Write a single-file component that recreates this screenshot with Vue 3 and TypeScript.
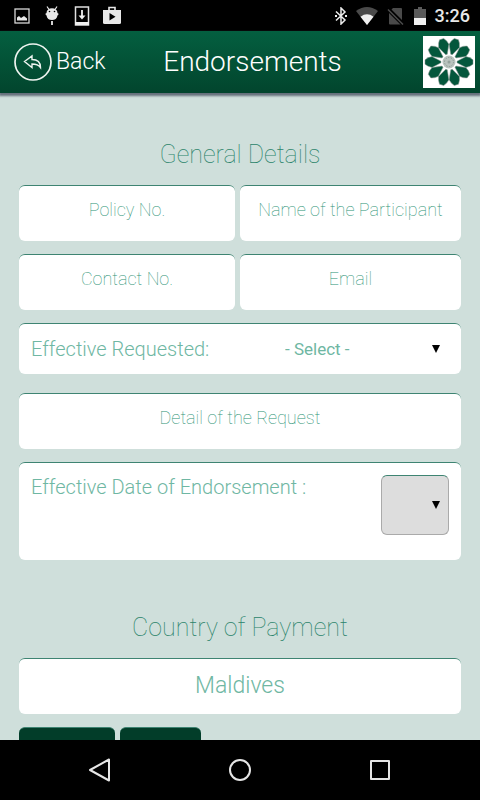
<script setup lang="ts">
import { ref } from 'vue'

const policyNo = ref('')
const participant = ref('')
const contactNo = ref('')
const email = ref('')
const requested = ref('')
const detail = ref('')
const effectiveDate = ref('')
const country = ref('Maldives')

const petals: number[] = Array.from({ length: 10 }, (_, i) => 18 + i * 36)
</script>

<template>
  <div class="screen">
    <div class="status">
      <div class="status-group left">
        <svg width="16" height="16" viewBox="0 0 16 16">
          <rect x="1" y="1" width="14" height="14" fill="none" stroke="#d8d8d8" stroke-width="1.3" />
          <path d="M3 12.500V9.500l2-1.500 2 2 3-2 3 2.500v2z" fill="#e8e8e8" />
        </svg>
        <svg width="16" height="20" viewBox="0 0 16 20">
          <path d="M3 0.500l2 3M13 0.500l-2 3" stroke="#e8e8e8" stroke-width="1.200" />
          <path d="M2.500 7a5.500 4.800 0 0 1 11 0l1.300 1-1.300 1.500c-.5 3-2.500 4.500-5.500 4.500s-5-1.500-5.500-4.500L1.200 8z" fill="#e8e8e8" />
          <circle cx="5.500" cy="5.500" r=".8" /><circle cx="10.500" cy="5.500" r=".8" />
          <path d="M8 15v4" stroke="#e8e8e8" stroke-width="1.800" />
        </svg>
        <svg width="16" height="20" viewBox="0 0 16 20">
          <rect x="1.500" y="1" width="13" height="18" fill="none" stroke="#e0e0e0" stroke-width="1.500" />
          <path d="M1 16h14v3H1z" fill="#f0f0f0" />
          <path d="M8 4v7" stroke="#f0f0f0" stroke-width="1.800" />
          <path d="M4.500 9.500h7L8 13.500z" fill="#f0f0f0" />
        </svg>
        <svg width="20" height="20" viewBox="0 0 20 20">
          <path d="M7 4V1.500h6V4" fill="none" stroke="#e8e8e8" stroke-width="1.600" />
          <path d="M1 4h18v12.500q0 1.500-1.500 1.500h-15Q1 18 1 16.500z" fill="#e8e8e8" />
          <path d="M7.500 7v7.500l6-3.700z" fill="#000" />
        </svg>
      </div>
      <div class="status-group right">
        <svg width="12" height="18" viewBox="0 0 12 18">
          <path d="M1 4.500l9 8.500-4 4V1l4 4-9 8.500" fill="none" stroke="#ececec" stroke-width="1.500" />
          <path d="M0 8h2v2H0zM10 8h2v2h-2z" fill="#ececec" />
        </svg>
        <svg width="22" height="18" viewBox="0 0 22 18">
          <path d="M0 4Q11-4 22 4L11 18z" fill="#4a4a4a" />
          <path d="M4.500 9.700Q11 5 17.500 9.700L11 18z" fill="#f0f0f0" />
        </svg>
        <svg width="18" height="18" viewBox="0 0 18 18">
          <path d="M6 1h8q1 0 1 1v11L4.500 2.500zM2 6l11.500 11.500H3q-1 0-1-1z" fill="#4a4a4a" />
          <path d="M1 2.500l15 15" stroke="#4a4a4a" stroke-width="1.500" />
        </svg>
        <svg width="12" height="18" viewBox="0 0 12 18">
          <path d="M0 2h4V0h4v2h4v9H0z" fill="#5a5a5a" />
          <path d="M0 11h12v7H0z" fill="#f0f0f0" />
        </svg>
        <span class="time">3:26</span>
      </div>
    </div>

    <header class="header">
      <button type="button" class="back">
        <svg width="38" height="38" viewBox="0 0 38 38" fill="none" stroke="#eef4f0">
          <circle cx="19" cy="19" r="18" stroke-width="1.700" />
          <path d="M10.500 18.500L18 13v3.500c5.500 0 8.500 2.500 8.500 8-2-3-4.500-3.500-8.500-3.500v3.500z" stroke-width="1.400" />
        </svg>
        <span>Back</span>
      </button>
      <h1>Endorsements</h1>
      <svg class="logo" width="52" height="52" viewBox="0 0 52 52">
        <rect width="52" height="52" fill="#fff" />
        <g transform="translate(26 26)">
          <path
            v-for="a in petals"
            :key="a"
            d="M-.8-8L-5.400-17Q-4.800-21-2.200-24h4.400Q4.800-21 5.400-17L.8-8z"
            :transform="`rotate(${a})`"
            fill="#04573c"
            stroke="#8f9a95"
            stroke-width=".5"
          />
          <circle r="6.500" fill="#b9c3be" />
          <circle r="4.500" fill="none" stroke="#8b9a93" stroke-dasharray="1.400 1.400" />
          <circle r="1.500" fill="#94a19b" />
        </g>
      </svg>
    </header>

    <main class="content">
      <form @submit.prevent>
        <h2>General Details</h2>
        <div class="rows">
          <div class="pair">
            <input v-model="policyNo" class="field" type="text" placeholder="Policy No." aria-label="Policy No." />
            <input v-model="participant" class="field" type="text" placeholder="Name of the Participant" aria-label="Name of the Participant" />
          </div>
          <div class="pair">
            <input v-model="contactNo" class="field" type="tel" placeholder="Contact No." aria-label="Contact No." />
            <input v-model="email" class="field" type="email" placeholder="Email" aria-label="Email" />
          </div>
          <div class="panel request">
            <label for="requested">Effective Requested:</label>
            <div class="picker">
              <select id="requested" v-model="requested">
                <option value="">- Select -</option>
              </select>
              <svg class="arrow" width="8" height="8" viewBox="0 0 8 8"><path d="M0 0h8L4 8z" /></svg>
            </div>
          </div>
          <input v-model="detail" class="field" type="text" placeholder="Detail of the Request" aria-label="Detail of the Request" />
          <div class="panel date">
            <label for="date">Effective Date of Endorsement :</label>
            <div class="picker boxed">
              <select id="date" v-model="effectiveDate">
                <option value=""></option>
              </select>
              <svg class="arrow" width="8" height="8" viewBox="0 0 8 8"><path d="M0 0h8L4 8z" /></svg>
            </div>
          </div>
        </div>
        <h2 class="second">Country of Payment</h2>
        <div class="rows">
          <input v-model="country" class="field country" type="text" aria-label="Country of Payment" />
          <div class="actions">
            <button type="submit" class="submit" aria-label="Submit"></button>
            <button type="reset" class="reset" aria-label="Reset"></button>
          </div>
        </div>
      </form>
    </main>

    <nav class="nav">
      <button type="button" aria-label="Back">
        <svg width="24" height="24" viewBox="0 0 24 24"><path d="M21 1.500v21L2 12z" /></svg>
      </button>
      <button type="button" aria-label="Home">
        <svg width="24" height="24" viewBox="0 0 24 24"><circle cx="12" cy="12" r="10" /></svg>
      </button>
      <button type="button" aria-label="Recent apps">
        <svg width="24" height="24" viewBox="0 0 24 24"><rect x="3" y="3" width="18" height="18" /></svg>
      </button>
    </nav>
  </div>
</template>

<style>
body {
  margin: 0;
  background: #000;
}
</style>

<style scoped>
.screen {
  display: flex;
  flex-direction: column;
  height: 100vh;
  background: #cfdfdb;
  font-family: Roboto, sans-serif;
  font-weight: 300;
}
.screen * {
  box-sizing: border-box;
}
svg {
  display: block;
  flex: none;
}
button,
input,
select {
  margin: 0;
  border: 0;
  font: inherit;
}
.status {
  flex: none;
  display: flex;
  align-items: center;
  justify-content: space-between;
  height: 31px;
  padding: 0 10px 0 14px;
  background: #000;
}
.status-group {
  display: flex;
  align-items: center;
}
.left {
  gap: 14px;
}
.left svg:last-child {
  margin-left: -2px;
}
.right {
  gap: 9px;
}
.time {
  color: #e8e8e8;
  font-size: 18px;
  font-weight: 500;
  line-height: 30px;
}
.header {
  position: relative;
  z-index: 1;
  flex: none;
  display: grid;
  grid-template-columns: 1fr auto 1fr;
  align-items: center;
  height: 62px;
  padding: 0 5px 0 14px;
  background: linear-gradient(#045f40, #02452d);
  box-shadow: 0 2px 2px 1px #66717c;
  color: #fff;
}
.back {
  justify-self: start;
  display: flex;
  align-items: center;
  gap: 4px;
  padding: 0;
  background: none;
  color: #fff;
  font-size: 23px;
  line-height: 32px;
}
h1 {
  margin: 0;
  padding-left: 16px;
  font-size: 28px;
  font-weight: 300;
  line-height: 32px;
}
.logo {
  justify-self: end;
}
.content {
  flex: 1;
  min-height: 0;
  overflow: hidden;
  padding: 46px 19px 0;
}
h2 {
  margin: 0 0 14px;
  color: #2a836a;
  font-size: 25px;
  font-weight: 100;
  line-height: 32px;
  text-align: center;
}
.second {
  margin-top: 52px;
}
.rows {
  display: flex;
  flex-direction: column;
  gap: 13px;
}
.pair {
  display: grid;
  grid-template-columns: 216fr 221fr;
  gap: 5px;
}
.field,
.panel {
  width: 100%;
  min-width: 0;
  border-top: 1px solid #3e8472;
  border-radius: 6px;
  background: #fff;
  color: #6fb7a3;
}
.field {
  height: 56px;
  padding: 0 12px 8px;
  font-size: 18px;
  font-weight: 100;
  text-align: center;
  outline: none;
}
.field::placeholder {
  color: #2b9274;
  opacity: 1;
}
.country {
  padding-bottom: 2px;
  font-size: 23px;
  font-weight: 300;
}
.panel {
  display: flex;
  justify-content: space-between;
  padding: 0 12px;
  font-size: 20px;
  line-height: 24px;
}
.request {
  align-items: center;
  height: 51px;
  margin-bottom: 6px;
}
.date {
  align-items: flex-start;
  height: 98px;
  padding-top: 12px;
}
.picker {
  display: flex;
  align-items: center;
  width: 164px;
}
select {
  flex: 1;
  min-width: 0;
  padding: 0;
  appearance: none;
  background: none;
  color: #6fb7a3;
  font-size: 17px;
  font-weight: 400;
  outline: none;
}
.arrow {
  margin-right: 9px;
  fill: #000;
  pointer-events: none;
}
.boxed {
  width: 68px;
  height: 60px;
  border: 1px solid #aaa;
  border-top-color: #3e8472;
  border-radius: 6px;
  background: #ddd;
}
.boxed select {
  align-self: stretch;
}
.boxed .arrow {
  margin-right: 8px;
}
.actions {
  display: flex;
  gap: 5px;
}
.actions button {
  height: 56px;
  border-top: 1px solid #3e8472;
  border-radius: 6px;
  background: #023d29;
}
.submit {
  width: 96px;
}
.reset {
  width: 81px;
}
.nav {
  flex: none;
  display: flex;
  justify-content: center;
  gap: 92px;
  height: 60px;
  background: #000;
}
.nav button {
  display: flex;
  align-items: center;
  justify-content: center;
  width: 48px;
  padding: 0;
  background: none;
}
.nav svg {
  fill: none;
  stroke: #e6e6e6;
  stroke-width: 2;
  stroke-linejoin: round;
}
</style>
